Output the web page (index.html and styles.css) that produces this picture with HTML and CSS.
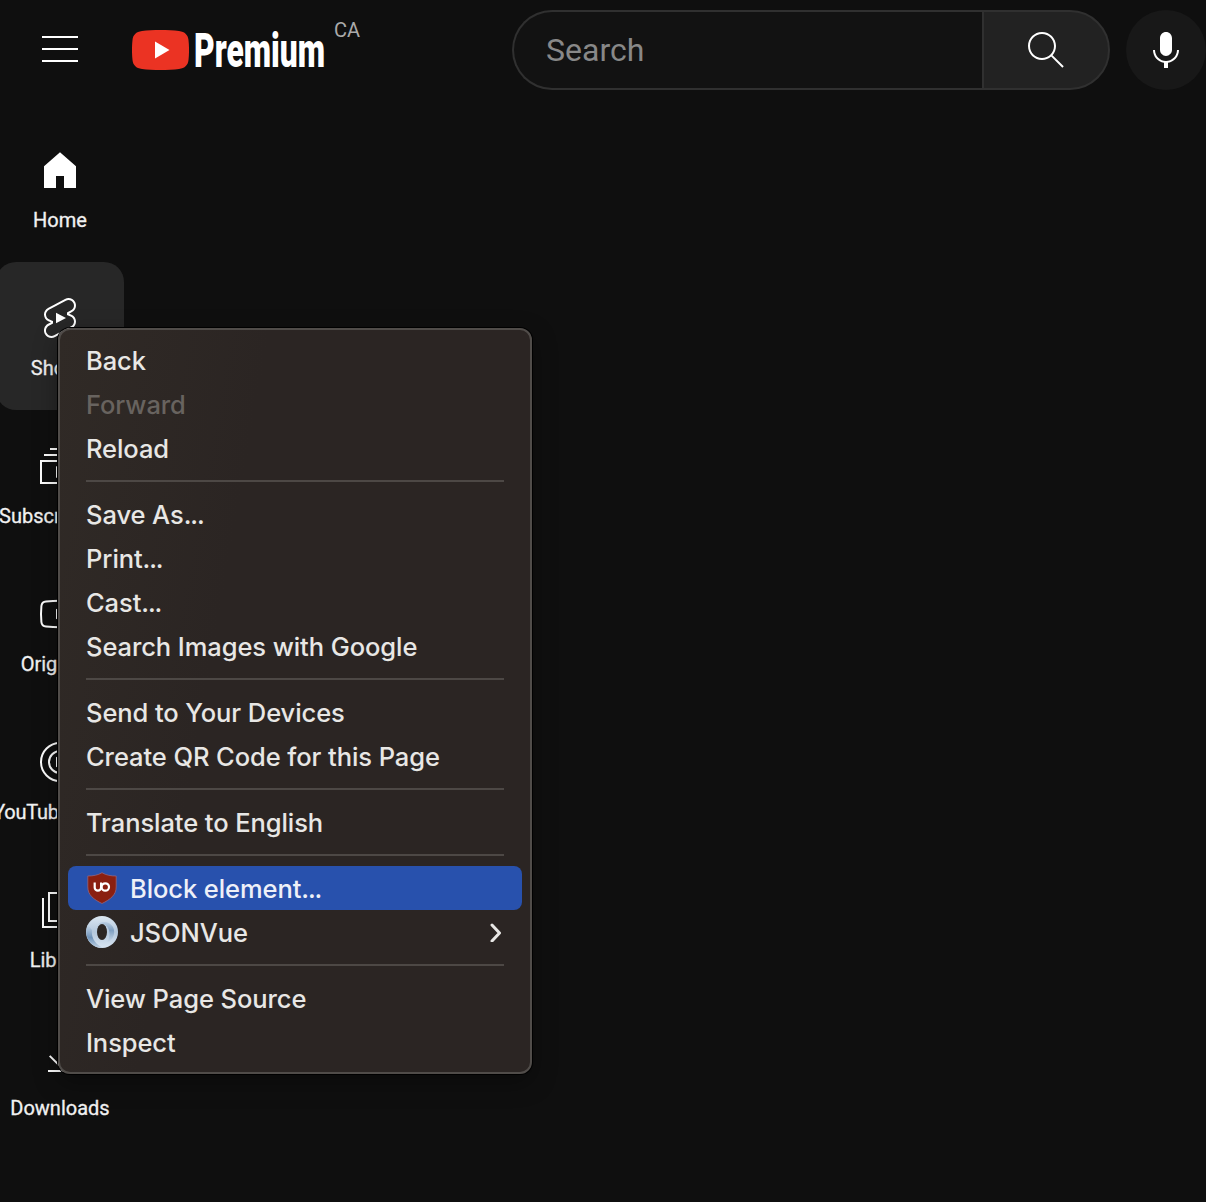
FILE: index.html
```html
<!DOCTYPE html>
<html lang="en">
<head>
<meta charset="utf-8">
<title>YouTube</title>
<link rel="stylesheet" href="styles.css">
</head>
<body>
<header class="masthead">
  <button class="guide-button" aria-label="Guide">
    <svg class="icon" viewBox="0 0 24 24"><path d="M21 6H3V5h18v1zm0 5H3v1h18v-1zm0 6H3v1h18v-1z"/></svg>
  </button>
  <a class="logo">
    <svg class="logo-mark" viewBox="0 0 57 40"><path fill="#eb3323" d="M10 1C20-.3 37-.3 47 1c6 .7 9 4 9.500 9 .7 6 .7 14 0 20-.5 5-3.500 8.300-9.500 9-10 1.300-27 1.300-37 0-6-.7-9-4-9.500-9-.7-6-.7-14 0-20C1 5 4 1.700 10 1z"/><path fill="#fff" d="M23 11.500v17L37.500 20z"/></svg>
    <svg class="logo-word" viewBox="0 0 132 48"><text x="0" y="41" textLength="131" lengthAdjust="spacingAndGlyphs">Premium</text></svg>
    <span class="country">CA</span>
  </a>
  <form class="search">
    <div class="search-field">Search</div>
    <div class="search-button">
      <svg class="icon" viewBox="0 0 24 24"><path d="m20.870 20.170-5.590-5.590C16.350 13.350 17 11.750 17 10c0-3.870-3.130-7-7-7s-7 3.130-7 7 3.130 7 7 7c1.750 0 3.350-.65 4.580-1.710l5.590 5.590.7-.71zM10 16c-3.310 0-6-2.690-6-6s2.690-6 6-6 6 2.690 6 6-2.690 6-6 6z"/></svg>
    </div>
  </form>
  <div class="mic">
    <svg class="icon" viewBox="0 0 24 24"><path d="M12 3C10.340 3 9 4.370 9 6.070V11.930C9 13.630 10.340 15 12 15C13.660 15 15 13.630 15 11.930V6.070C15 4.370 13.660 3 12 3ZM18.500 12H17.500C17.500 15.030 15.030 17.500 12 17.500C8.970 17.500 6.500 15.030 6.500 12H5.500C5.500 15.240 7.890 17.930 11 18.410V21H13V18.410C16.110 17.930 18.500 15.240 18.500 12Z"/></svg>
  </div>
</header>

<nav class="guide">
  <a class="entry">
    <svg class="icon" viewBox="0 0 24 24"><path d="M4 21V10.080l8-6.960 8 6.960V21h-6v-6h-4v6z"/></svg>
    <span>Home</span>
  </a>
  <a class="entry entry-hover">
    <svg class="icon" viewBox="0 0 24 24"><path d="M10 14.650v-5.300L15 12l-5 2.650zm7.770-4.330c-.77-.32-1.200-.5-1.200-.5L18 9.060c1.840-.96 2.530-3.230 1.560-5.060s-3.240-2.530-5.070-1.560L6 6.940c-1.290.68-2.070 2.040-2 3.490.07 1.420.93 2.670 2.220 3.250.03.01 1.200.5 1.200.5L6 14.930c-1.830.97-2.530 3.240-1.560 5.070.97 1.830 3.240 2.530 5.070 1.560l8.500-4.500c1.290-.68 2.060-2.040 1.990-3.490-.07-1.420-.94-2.680-2.230-3.250zm-.23 5.860l-8.500 4.500c-1.340.71-3.010.2-3.720-1.140-.71-1.340-.2-3.010 1.140-3.720l2.040-1.080v-1.210l-.69-.28-1.110-.46c-.99-.41-1.650-1.350-1.700-2.410-.05-1.060.52-2.060 1.460-2.560l8.500-4.500c1.340-.71 3.010-.2 3.720 1.140.71 1.340.2 3.010-1.140 3.720L15.500 9.260v1.210l1.800.74c.99.41 1.650 1.350 1.700 2.410.05 1.060-.52 2.060-1.460 2.560z"/></svg>
    <span>Shorts</span>
  </a>
  <a class="entry">
    <svg class="icon" viewBox="0 0 24 24"><path d="M10 18v-6l5 3-5 3zm7-15H7v1h10V3zm3 3H4v1h16V6zm2 3H2v12h20V9zM3 10h18v10H3V10z"/></svg>
    <span>Subscriptions</span>
  </a>
  <a class="entry">
    <svg class="icon" viewBox="0 0 24 24"><path d="M10 9.350v5.300L15 12z"/><path class="line" d="M5 5.700Q12 5.100 19 5.700 21.200 5.900 21.300 8 21.700 12 21.300 16 21.200 18.100 19 18.300 12 18.900 5 18.300 2.900 18.100 2.700 16 2.300 12 2.700 8 2.900 5.900 5 5.700z"/></svg>
    <span>Originals</span>
  </a>
  <a class="entry">
    <svg class="icon" viewBox="0 0 24 24"><path d="M10 9.350v5.300L15 12z"/><circle class="line" cx="12" cy="12" r="9.500"/><circle class="line" cx="12" cy="12" r="5.500"/></svg>
    <span class="long-label">YouTube Music</span>
  </a>
  <a class="entry">
    <svg class="icon" viewBox="0 0 24 24"><path d="M11 7v7l6-3.500z"/><path class="line" d="M6.500 3.500h14v14h-14zM3.500 6v14.500H18"/></svg>
    <span>Library</span>
  </a>
  <a class="entry">
    <svg class="icon" viewBox="0 0 24 24"><path d="M17 18v1H6v-1h11zm-.5-6.600-.7-.7-3.800 3.700V4h-1v10.400l-3.800-3.800-.7.7 5 5 5-4.900z"/></svg>
    <span>Downloads</span>
  </a>
</nav>

<div class="context-menu">
  <div class="item"><span>Back</span></div>
  <div class="item disabled"><span>Forward</span></div>
  <div class="item"><span>Reload</span></div>
  <hr>
  <div class="item"><span>Save As<i>...</i></span></div>
  <div class="item"><span>Print<i>...</i></span></div>
  <div class="item"><span>Cast<i>...</i></span></div>
  <div class="item"><span>Search Images with Google</span></div>
  <hr>
  <div class="item"><span>Send to Your Devices</span></div>
  <div class="item"><span>Create QR Code for this Page</span></div>
  <hr>
  <div class="item"><span>Translate to English</span></div>
  <hr>
  <div class="item selected">
    <svg class="ext-icon" viewBox="0 0 32 32"><path fill="#8a1f11" stroke="#96647c" stroke-width=".8" d="M16 .7C12 3.200 7 4 1.800 4v11c0 8 6 12.500 14.200 16.500C24.200 27.500 30.200 23 30.200 15V4C25 4 20 3.200 16 .7z"/><path fill="none" stroke="#fff" stroke-width="2.200" d="M8.700 10.500v5a3.200 3.200 0 0 0 6.400 0v-5"/><circle cx="19.300" cy="15" r="3.700" fill="none" stroke="#fff" stroke-width="2.200"/></svg>
    <span>Block element<i>...</i></span>
  </div>
  <div class="item">
    <svg class="ext-icon" viewBox="0 0 32 32">
      <defs>
        <linearGradient id="ring-base" x1="0" y1="0" x2="0" y2="1"><stop offset="0" stop-color="#dbe7f2"/><stop offset=".5" stop-color="#b4c8dd"/><stop offset="1" stop-color="#d8e5f2"/></linearGradient>
        <linearGradient id="ring-left" x1="0" y1="0" x2="0" y2="1"><stop offset="0" stop-color="#c9d9e9"/><stop offset=".55" stop-color="#6f93b9"/><stop offset="1" stop-color="#c3d5e7"/></linearGradient>
        <linearGradient id="ring-right" x1="0" y1="0" x2="0" y2="1"><stop offset="0" stop-color="#b9cde1"/><stop offset=".4" stop-color="#7f9fc1"/><stop offset="1" stop-color="#cfdeec"/></linearGradient>
      </defs>
      <circle cx="16" cy="16" r="16" fill="url(#ring-base)"/>
      <path fill="url(#ring-left)" d="M2 8.500C-1 15 0 23 5.500 28 9 31 13 32 17 32 9 28 5 22 6 14 4 12 3 10 2 8.500z"/>
      <path fill="url(#ring-right)" d="M12 8.500C18 6 24 11 23.500 19 23 23 22 25 20 27 27 25 30 17 27 11 24 6 17 4 12 8.500z"/>
      <ellipse cx="16" cy="16" rx="5" ry="8" fill="#2c2724"/>
    </svg>
    <span>JSONVue</span>
    <svg class="chevron" viewBox="0 0 14 20"><path d="M2 3l7.500 8L2 19"/></svg>
  </div>
  <hr>
  <div class="item"><span>View Page Source</span></div>
  <div class="item"><span>Inspect</span></div>
</div>
</body>
</html>
```
FILE: styles.css
```css
* { box-sizing: border-box; }
body {
  margin: 0;
  width: 1206px;
  height: 1202px;
  overflow: hidden;
  position: relative;
  background: #0f0f0f;
  color: #f1f1f1;
  font-family: Roboto, sans-serif;
}
.icon { display: block; flex: none; width: 48px; height: 48px; fill: #fff; }
.line { fill: none; stroke: #fff; stroke-width: 1; }

.masthead { display: flex; height: 114px; padding-top: 10px; }
.guide-button { border: 0; background: none; padding: 0; margin-left: 36px; width: 48px; height: 80px; }
.logo { display: flex; width: 428px; padding-left: 48px; height: 80px; }
.logo-mark { width: 57px; height: 40px; margin-top: 20px; flex: none; }
.logo-word { width: 132px; height: 48px; margin: 16px 0 0 5px; flex: none; }
.logo-word text { font: 900 48px Roboto, sans-serif; fill: #fff; }
.country { margin: 8px 0 0 8px; font-size: 20px; line-height: 24px; color: #aaa; }
.search { display: flex; width: 598px; height: 80px; }
.search-field {
  flex: 1;
  border: 2px solid #303030;
  border-right: 0;
  border-radius: 40px 0 0 40px;
  background: #121212;
  padding-left: 32px;
  font-size: 32px;
  line-height: 76px;
  color: #888;
}
.search-button {
  width: 128px;
  border: 2px solid #303030;
  border-radius: 0 40px 40px 0;
  background: #222;
  padding: 14px 0 0 38px;
}
.mic { width: 80px; height: 80px; margin-left: 16px; border-radius: 50%; background: #181818; padding: 16px; flex: none; }

.guide { width: 128px; margin-left: -4px; }
.entry {
  display: flex;
  flex-direction: column;
  align-items: center;
  height: 148px;
  padding: 32px 0 0;
  border-radius: 20px;
  font-size: 20px;
  line-height: 28px;
  white-space: nowrap;
  -webkit-text-stroke: .3px #f1f1f1;
}
.entry span { margin-top: 12px; }
.entry .long-label { letter-spacing: -.25px; }
.entry-hover { background: #272727; }

.context-menu {
  position: absolute;
  left: 58px;
  top: 328px;
  width: 474px;
  height: 746px;
  padding: 8px;
  border: 2px solid #504c49;
  border-radius: 12px;
  background: linear-gradient(100deg, #302a26 0, #2b2523 35%, #2b2523 100%);
  box-shadow: 0 0 0 1px #000, 0 8px 24px rgba(0, 0, 0, .35);
  font: 500 25.500px/44px Inter, sans-serif;
  letter-spacing: -.08px;
  color: #e8e7e5;
}
.context-menu hr { height: 2px; margin: 10px 18px; border: 0; background: #4d4845; }
.item { display: flex; align-items: center; height: 44px; padding: 0 18px; border-radius: 8px; white-space: nowrap; }
.item span { padding-top: 2px; }
.item i { font-style: normal; letter-spacing: -1.100px; }
.disabled { color: #68635f; }
.selected { background: #2851ad; color: #eef0f8; }
.ext-icon { width: 32px; height: 32px; margin-right: 12px; flex: none; }
.chevron { width: 14px; height: 20px; margin-left: auto; fill: none; stroke: #e8e7e5; stroke-width: 3; stroke-linecap: round; stroke-linejoin: round; }
```
